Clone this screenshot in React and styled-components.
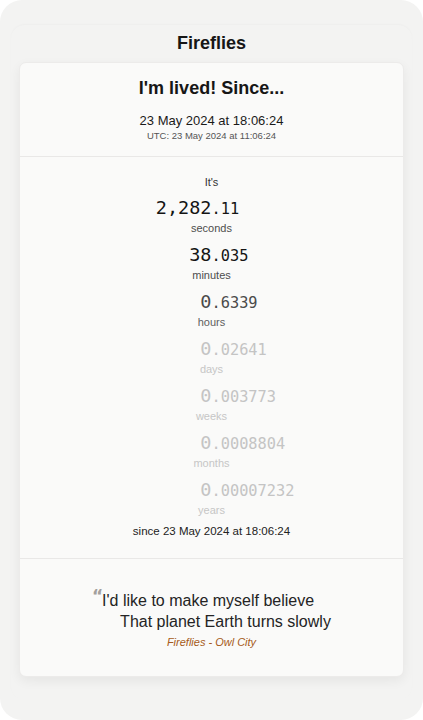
import React from 'react'
import styled, { createGlobalStyle } from 'styled-components'

const GlobalStyle = createGlobalStyle`
  html, body {
    margin: 0;
    padding: 0;
    background: #ffffff;
  }
  * { box-sizing: border-box; }
`

const units = [
  { whole: '2,282', frac: '.11', label: 'seconds', tone: 'strong' },
  { whole: '38', frac: '.035', label: 'minutes', tone: 'strong' },
  { whole: '0', frac: '.6339', label: 'hours', tone: 'mid' },
  { whole: '0', frac: '.02641', label: 'days', tone: 'faint' },
  { whole: '0', frac: '.003773', label: 'weeks', tone: 'faint' },
  { whole: '0', frac: '.0008804', label: 'months', tone: 'faint' },
  { whole: '0', frac: '.00007232', label: 'years', tone: 'faint' },
]

const numberColor = { strong: '#141414', mid: '#4a4a4a', faint: '#c4c4c4' }
const labelColor = { strong: '#4d4d4d', mid: '#5e5e5e', faint: '#c6c6c6' }

const App = () => {
  return (
    <>
      <GlobalStyle />
      <Screen>
        <Panel>
          <Title>Fireflies</Title>
          <Card>
            <Header>
              <Headline>I'm lived! Since...</Headline>
              <DateLine>23 May 2024 at 18:06:24</DateLine>
              <UtcLine>UTC: 23 May 2024 at 11:06:24</UtcLine>
            </Header>
            <Counters>
              <Small>It's</Small>
              {units.map((u) => (
                <Unit key={u.label}>
                  <Amount tone={u.tone}>
                    <Whole>{u.whole}</Whole>
                    <Frac>{u.frac}</Frac>
                  </Amount>
                  <UnitLabel tone={u.tone}>{u.label}</UnitLabel>
                </Unit>
              ))}
              <Since>since 23 May 2024 at 18:06:24</Since>
            </Counters>
            <QuoteBox>
              <Lyrics>
                <Line>I'd like to make myself believe</Line>
                <Line indent>That planet Earth turns slowly</Line>
              </Lyrics>
              <Credit>Fireflies - Owl City</Credit>
            </QuoteBox>
          </Card>
        </Panel>
      </Screen>
    </>
  )
}

export default App

const Screen = styled.div`
  width: 423px;
  height: 720px;
  background: #f3f3f2;
  border-radius: 22px;
  padding: 25px 11px 20px;
  font-family: "Liberation Sans", Arial, sans-serif;
  color: #1a1a1a;
`

const Panel = styled.div`
  height: 675px;
  border-radius: 14px;
  background: #f3f3f2;
  box-shadow: 0 -1px 2px rgba(0, 0, 0, 0.025);
  padding: 7px 8px 0;
  display: flex;
  flex-direction: column;
  gap: 8px;
`

const Title = styled.h1`
  margin: 0;
  font-size: 18px;
  line-height: 22px;
  font-weight: 700;
  text-align: center;
  color: #161616;
`

const Card = styled.div`
  background: #fafaf9;
  border: 1px solid #ecebea;
  border-radius: 7px;
  box-shadow: 0 4px 12px rgba(0, 0, 0, 0.06);
  display: flex;
  flex-direction: column;
`

const Header = styled.div`
  padding: 13px 0 14px;
  display: flex;
  flex-direction: column;
  align-items: center;
  border-bottom: 1px solid #e9e8e7;
`

const Headline = styled.h2`
  margin: 0 0 13px;
  font-size: 18px;
  line-height: 24px;
  font-weight: 700;
  color: #161616;
`

const DateLine = styled.div`
  font-size: 13px;
  line-height: 16px;
  color: #1a1a1a;
  margin-bottom: 1px;
`

const UtcLine = styled.div`
  font-size: 9.5px;
  line-height: 12px;
  color: #555;
`

const Counters = styled.div`
  padding: 18px 0 20px;
  display: flex;
  flex-direction: column;
  align-items: stretch;
  gap: 7px;
  border-bottom: 1px solid #e9e8e7;
`

const Small = styled.div`
  font-size: 11px;
  line-height: 14px;
  text-align: center;
  color: #333;
`

const Unit = styled.div`
  display: flex;
  flex-direction: column;
  align-items: center;
`

const Amount = styled.div`
  width: 100%;
  display: grid;
  grid-template-columns: 1fr 1fr;
  align-items: baseline;
  font-family: "DejaVu Sans Mono", "Liberation Mono", monospace;
  color: ${(p) => numberColor[p.tone]};
  line-height: 24px;
  height: 24px;
`

const Whole = styled.span`
  text-align: right;
  font-size: 18.5px;
`

const Frac = styled.span`
  text-align: left;
  font-size: 15.3px;
`

const UnitLabel = styled.div`
  font-size: 11px;
  line-height: 16px;
  color: ${(p) => labelColor[p.tone]};
`

const Since = styled.div`
  font-size: 11.5px;
  line-height: 14px;
  text-align: center;
  color: #222;
  margin-top: -1px;
`

const QuoteBox = styled.div`
  padding: 31px 0 27px;
  display: flex;
  flex-direction: column;
  align-items: center;
`

const Lyrics = styled.div`
  display: inline-flex;
  flex-direction: column;
  align-items: flex-start;
  font-size: 16px;
  line-height: 21px;
  color: #242424;
  position: relative;
  padding-left: 10px;

  &::before {
    content: '\u201C';
    position: absolute;
    left: 0;
    top: -4px;
    font-size: 17px;
    font-weight: 700;
    color: #a3a09d;
    font-family: "DejaVu Sans", sans-serif;
  }
`

const Line = styled.div`
  padding-left: ${(p) => (p.indent ? '18px' : '0')};
  white-space: nowrap;
`

const Credit = styled.div`
  margin-top: 3px;
  font-size: 11px;
  line-height: 14px;
  font-style: italic;
  color: #a65a20;
`
